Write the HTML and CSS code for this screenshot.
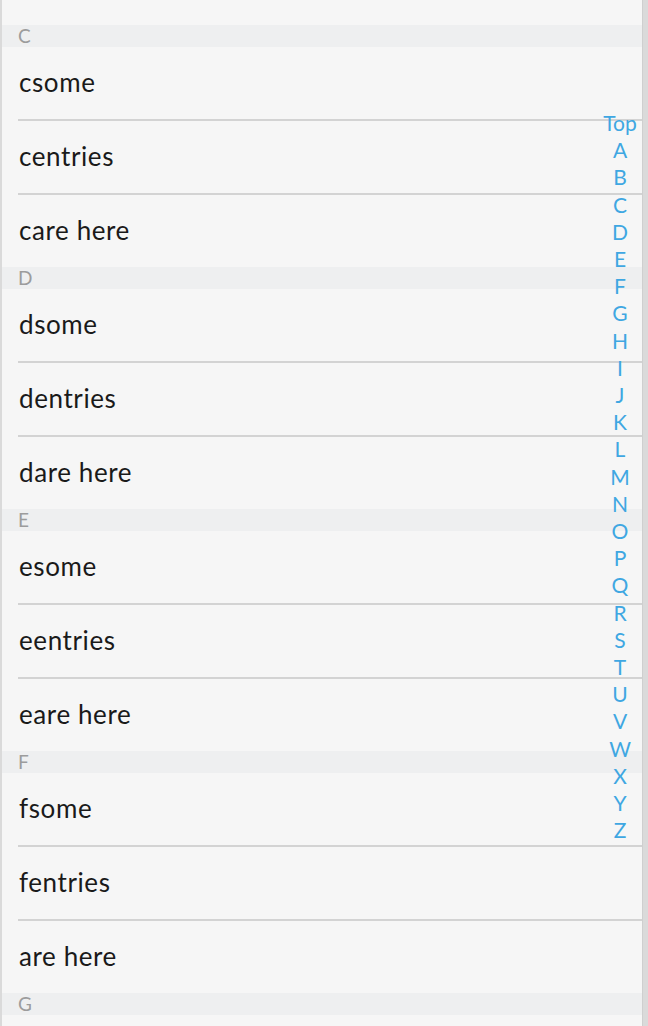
FILE: index.html
```html
<!DOCTYPE html>
<html lang="en">
<head>
<meta charset="utf-8">
<title>Index list</title>
<link rel="stylesheet" href="styles.css">
</head>
<body>
<div class="frame">
  <div class="list">
    <div class="tail"></div>
    <section class="section">
      <div class="header">C</div>
      <div class="item">csome</div>
      <div class="item">centries</div>
      <div class="item">care here</div>
    </section>
    <section class="section">
      <div class="header">D</div>
      <div class="item">dsome</div>
      <div class="item">dentries</div>
      <div class="item">dare here</div>
    </section>
    <section class="section">
      <div class="header">E</div>
      <div class="item">esome</div>
      <div class="item">eentries</div>
      <div class="item">eare here</div>
    </section>
    <section class="section">
      <div class="header">F</div>
      <div class="item">fsome</div>
      <div class="item">fentries</div>
      <div class="item">are here</div>
    </section>
    <section class="section">
      <div class="header">G</div>
      <div class="item"></div>
    </section>
  </div>
  <nav class="index">
    <span>Top</span><span>A</span><span>B</span><span>C</span><span>D</span><span>E</span><span>F</span><span>G</span><span>H</span><span>I</span><span>J</span><span>K</span><span>L</span><span>M</span><span>N</span><span>O</span><span>P</span><span>Q</span><span>R</span><span>S</span><span>T</span><span>U</span><span>V</span><span>W</span><span>X</span><span>Y</span><span>Z</span>
  </nav>
</div>
</body>
</html>
```

FILE: styles.css
```css
html, body {
  margin: 0;
  padding: 0;
  height: 100%;
  overflow: hidden;
  background: #dadada;
}

.frame {
  position: relative;
  height: 1026px;
  overflow: hidden;
  margin-left: 2px;
  width: 640px;
  background: #f6f6f6;
  box-shadow: 1px 0 0 #cfcfcf;
  font-family: "Lato", "Noto Sans", sans-serif;
}

.list {
  display: flex;
  flex-direction: column;
}

.tail {
  height: 25px;
}

.section {
  display: flex;
  flex-direction: column;
}

.header {
  height: 22px;
  background: #eeeff0;
  color: #9c9c9c;
  font-size: 19px;
  line-height: 22px;
  padding-left: 16px;
}

.item {
  height: 72px;
  box-sizing: border-box;
  padding-bottom: 3px;
  margin-left: 16px;
  padding-left: 1px;
  display: flex;
  align-items: center;
  font-size: 26px;
  color: #1a1a1a;
  letter-spacing: 0.6px;
}

.item + .item {
  border-top: 2px solid #d3d3d3;
  height: 74px;
}

.index {
  position: absolute;
  top: 109px;
  right: 3px;
  width: 38px;
  display: flex;
  flex-direction: column;
  align-items: center;
  color: #3fa7e2;
  font-size: 21px;
  line-height: 27.2px;
}
```
